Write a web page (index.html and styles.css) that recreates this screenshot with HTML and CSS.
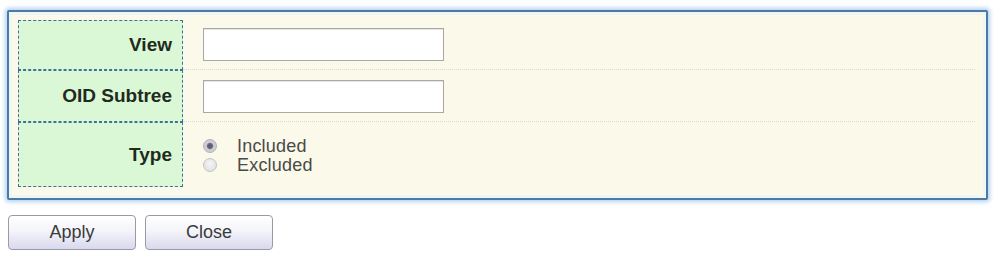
FILE: index.html
```html
<!DOCTYPE html>
<html>
<head>
<meta charset="utf-8">
<link rel="stylesheet" href="styles.css">
</head>
<body>
<div class="page">
  <div class="panel">
    <div class="table">
      <div class="row r1">
        <div class="label">View</div>
        <div class="field"><input class="text" type="text"></div>
      </div>
      <div class="row r2">
        <div class="label">OID Subtree</div>
        <div class="field"><input class="text" type="text"></div>
      </div>
      <div class="row r3">
        <div class="label">Type</div>
        <div class="field">
          <div class="radios">
            <div class="opt"><span class="radio on"></span><span class="otext">Included</span></div>
            <div class="opt"><span class="radio"></span><span class="otext">Excluded</span></div>
          </div>
        </div>
      </div>
    </div>
  </div>
  <div class="buttons">
    <button class="btn">Apply</button>
    <button class="btn">Close</button>
  </div>
</div>
</body>
</html>
```

FILE: styles.css
```css
html, body {
  margin: 0;
  padding: 0;
  background: #ffffff;
  font-family: "Liberation Sans", Arial, sans-serif;
}
.page {
  padding: 10px 0 0 7px;
}
.panel {
  box-sizing: border-box;
  width: 981px;
  height: 190px;
  border: 2px solid #4c79a6;
  border-radius: 2px;
  background: #fbf9ea;
  box-shadow: 0 0 4px 2px #b4d2ef, inset 0 0 0 3px #eef7f3;
  padding: 8px 9px 0 9px;
}
.table {
  display: flex;
  flex-direction: column;
}
.row {
  display: flex;
}
.r1 { height: 50px; }
.r2 { height: 52px; }
.r3 { height: 65px; }
.label {
  box-sizing: border-box;
  width: 165px;
  flex: none;
  background: #dbf8d6;
  border: 1px dashed #3f6f9e;
  display: flex;
  align-items: center;
  justify-content: flex-end;
  padding-right: 10px;
  font-weight: bold;
  font-size: 19px;
  color: #1f2a20;
}
.field {
  flex: 1;
  display: flex;
  align-items: center;
  padding-left: 20px;
  border-bottom: 1px dotted #dcd8cb;
  margin-right: 2px;
}
.r3 .field {
  border-bottom: none;
}
.r2 .field {
  padding-top: 2px;
}
.text {
  box-sizing: border-box;
  width: 241px;
  height: 33px;
  border: 1px solid #a9a9a4;
  box-shadow: inset 0 1px 1px #e4e4e4;
  background: #ffffff;
  margin: 0;
  padding: 0;
}
.radios {
  display: flex;
  flex-direction: column;
  padding-top: 2px;
}
.opt {
  display: flex;
  align-items: center;
  height: 19px;
}
.radio {
  box-sizing: border-box;
  width: 14px;
  height: 14px;
  border-radius: 50%;
  border: 1px solid #c4c4c6;
  background: radial-gradient(circle at 50% 40%, #f6f6f6 0%, #dadada 100%);
  margin-right: 20px;
  flex: none;
}
.radio.on {
  background: radial-gradient(circle at 50% 50%, #55556a 0, #6a6a7e 2.5px, #d0d0d6 3.8px, #cacad0 100%);
  border-color: #b2b2b8;
}
.otext {
  font-size: 18px;
  line-height: 19px;
  color: #4a4a48;
  letter-spacing: 0.2px;
}
.buttons {
  display: flex;
  gap: 9px;
  margin-top: 15px;
  margin-left: 1px;
}
.btn {
  box-sizing: border-box;
  width: 128px;
  height: 35px;
  border: 1px solid #9a9aa6;
  border-radius: 4px;
  background: linear-gradient(to bottom, #ffffff 0%, #f4f4fa 45%, #d9d9ef 100%);
  font-family: "Liberation Sans", Arial, sans-serif;
  font-size: 18px;
  color: #3a3a3a;
  padding: 0;
}
```
